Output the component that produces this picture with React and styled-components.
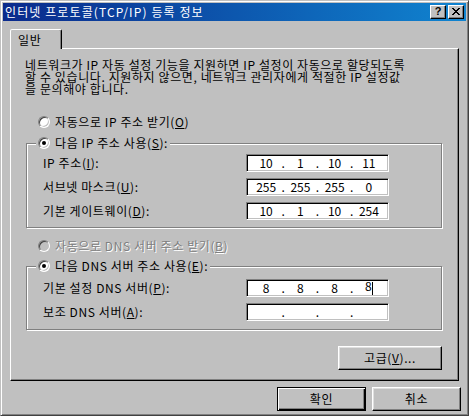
import React from "react"
import styled, { createGlobalStyle } from "styled-components"

const GlobalStyle = createGlobalStyle`
  html, body {
    margin: 0;
    padding: 0;
    background: #c0c0c0;
  }
`

const FONT = `"Noto Sans CJK KR", "Noto Sans", sans-serif`

const Window = styled.div`
  box-sizing: border-box;
  width: 469px;
  height: 416px;
  padding: 2px;
  background: #c0c0c0;
  border: 1px solid;
  border-color: #c0c0c0 #404040 #404040 #c0c0c0;
  box-shadow: inset 1px 1px #fff, inset -1px -1px #808080;
  display: flex;
  flex-direction: column;
  color: #000;
  font: 12px/1 ${FONT};
  letter-spacing: 0.6px;
`

const TitleBar = styled.div`
  height: 18px;
  flex: none;
  display: flex;
  align-items: center;
  padding: 0 2px 0 2px;
  background: linear-gradient(to right, #0a2a8c, #1084d0);
`

const Title = styled.div`
  flex: 1;
  color: #fff;
  font-size: 12px;
  letter-spacing: 1.1px;
  white-space: nowrap;
`

const CaptionButtons = styled.div`
  display: flex;
  gap: 2px;
`

const CaptionButton = styled.div`
  box-sizing: border-box;
  width: 16px;
  height: 14px;
  background: #c0c0c0;
  border: 1px solid;
  border-color: #fff #000 #000 #fff;
  box-shadow: inset -1px -1px #808080;
  display: flex;
  align-items: center;
  justify-content: center;
  font: bold 11px/1 "Liberation Sans", sans-serif;
  letter-spacing: 0;
  color: #000;
  padding-bottom: 1px;
`

const Body = styled.div`
  flex: 1;
  display: flex;
  flex-direction: column;
  padding: 8px 7px 0 7px;
`

const TabRow = styled.div`
  display: flex;
  height: 19px;
  position: relative;
  z-index: 1;
`

const Tab = styled.div`
  box-sizing: border-box;
  width: 52px;
  height: 20px;
  padding: 4px 0 0 7px;
  background: #c0c0c0;
  border: 1px solid;
  border-bottom: none;
  border-color: #fff #000 transparent #fff;
  border-radius: 2px 2px 0 0;
  box-shadow: inset -1px 0 #808080;
  font-size: 12px;
  line-height: 12px;
`

const Panel = styled.div`
  box-sizing: border-box;
  height: 333px;
  flex: none;
  display: flex;
  flex-direction: column;
  padding: 10px 16px 0 14px;
  border: 1px solid;
  border-color: #fff #000 #000 #fff;
  box-shadow: inset -1px -1px #808080;
`

const Intro = styled.p`
  margin: 0;
  line-height: 12px;
  font-size: 12px;
  white-space: nowrap;
`

const Option = styled.label`
  display: flex;
  align-items: center;
  gap: 5px;
  height: 16px;
  margin-top: ${(p) => p.$top || 0}px;
  margin-left: ${(p) => p.$indent || 0}px;
  color: ${(p) => (p.$disabled ? "#808080" : "#000")};
  text-shadow: ${(p) => (p.$disabled ? "1px 1px #fff" : "none")};
  white-space: nowrap;
`

const Radio = styled.span`
  position: relative;
  box-sizing: border-box;
  flex: none;
  width: 12px;
  height: 12px;
  border-radius: 50%;
  border: 1px solid;
  border-color: #808080 #fff #fff #808080;
  background: ${(p) => (p.$disabled ? "#c0c0c0" : "#fff")};
  box-shadow: inset 1px 1px #404040, inset -1px -1px #c0c0c0;

  &::after {
    content: "";
    display: ${(p) => (p.$checked ? "block" : "none")};
    position: absolute;
    left: 3px;
    top: 3px;
    width: 4px;
    height: 4px;
    border-radius: 50%;
    background: #000;
  }
`

const Group = styled.fieldset`
  margin: ${(p) => p.$top}px 0 0 1px;
  padding: 0;
  min-width: 0;
  border: 1px solid #808080;
  box-shadow: inset 1px 1px #fff, 1px 1px #fff;
`

const Legend = styled.legend`
  padding: 0 2px;
  margin-left: 9px;
  background: #c0c0c0;
`

const Fields = styled.div`
  display: grid;
  grid-template-columns: 203px 143px;
  row-gap: 6px;
  align-items: center;
  padding: ${(p) => p.$pt}px 0 ${(p) => p.$pb}px 16px;
`

const Label = styled.span`
  white-space: nowrap;
`

const IpBox = styled.div`
  box-sizing: border-box;
  width: 143px;
  height: 18px;
  display: flex;
  align-items: center;
  padding: 0 2px;
  background: #fff;
  border: 1px solid;
  border-color: #808080 #fff #fff #808080;
  box-shadow: inset 1px 1px #000, inset -1px -1px #c0c0c0;
  font: 12px/1 ${FONT};
  letter-spacing: 0;
`

const Octet = styled.span`
  flex: 1;
  text-align: center;
  padding-bottom: 1px;
`

const Dot = styled.span`
  width: 4px;
  margin: 0 -2px;
  text-align: center;
  padding-bottom: 1px;
`

const Caret = styled.span`
  display: inline-block;
  width: 1px;
  height: 13px;
  background: #000;
  vertical-align: middle;
`

const PanelFooter = styled.div`
  display: flex;
  justify-content: flex-end;
  margin-top: 16px;
`

const Button = styled.button`
  box-sizing: border-box;
  width: ${(p) => p.$w || 89}px;
  height: 24px;
  padding: 0;
  background: #c0c0c0;
  color: #000;
  font: 12px/1 ${FONT};
  letter-spacing: 0.6px;
  border: 1px solid;
  border-color: #fff #000 #000 #fff;
  box-shadow: inset -1px -1px #808080, inset 1px 1px #dfdfdf;
  ${(p) =>
    p.$default &&
    `
    border-color: #000;
    box-shadow: inset 1px 1px #fff, inset -1px -1px #000, inset -2px -2px #808080;
  `}
`

const ButtonRow = styled.div`
  display: flex;
  justify-content: flex-end;
  gap: 6px;
  margin: 6px -2px 0 0;
`

const U = styled.span`
  text-decoration: underline;
  text-underline-offset: 1px;
`

const CloseGlyph = () => (
  <svg width="8" height="7" viewBox="0 0 8 7" shapeRendering="crispEdges">
    {[
      [0, 6],
      [1, 5],
      [2, 4],
      [3, 3],
      [2, 4],
      [1, 5],
      [0, 6],
    ].map(([a, b], y) => (
      <g key={y}>
        <rect x={a} y={y} width={2} height={1} fill="#000" />
        {a !== b && <rect x={b} y={y} width={2} height={1} fill="#000" />}
      </g>
    ))}
  </svg>
)

const IpField = ({ value = ["", "", "", ""], caret }) => (
  <IpBox>
    {value.map((v, i) => (
      <React.Fragment key={i}>
        {i > 0 && <Dot>.</Dot>}
        <Octet>
          {v}
          {caret && i === 3 && <Caret />}
        </Octet>
      </React.Fragment>
    ))}
  </IpBox>
)

export default function App() {
  return (
    <>
      <GlobalStyle />
      <Window>
        <TitleBar>
          <Title>인터넷 프로토콜(TCP/IP) 등록 정보</Title>
          <CaptionButtons>
            <CaptionButton>?</CaptionButton>
            <CaptionButton>
              <CloseGlyph />
            </CaptionButton>
          </CaptionButtons>
        </TitleBar>
        <Body>
          <TabRow>
            <Tab>일반</Tab>
          </TabRow>
          <Panel>
            <Intro>
              네트워크가 IP 자동 설정 기능을 지원하면 IP 설정이 자동으로 할당되도록
              <br />
              할 수 있습니다. 지원하지 않으면, 네트워크 관리자에게 적절한 IP 설정값
              <br />
              을 문의해야 합니다.
            </Intro>

            <Option $top={19} $indent={13}>
              <Radio />
              <span>
                자동으로 IP 주소 받기(<U>O</U>)
              </span>
            </Option>

            <Group $top={5}>
              <Legend>
                <Option>
                  <Radio $checked />
                  <span>
                    다음 IP 주소 사용(<U>S</U>):
                  </span>
                </Option>
              </Legend>
              <Fields $pt={3} $pb={7}>
                <Label>
                  IP 주소(<U>I</U>):
                </Label>
                <IpField value={["10", "1", "10", "11"]} />
                <Label>
                  서브넷 마스크(<U>U</U>):
                </Label>
                <IpField value={["255", "255", "255", "0"]} />
                <Label>
                  기본 게이트웨이(<U>D</U>):
                </Label>
                <IpField value={["10", "1", "10", "254"]} />
              </Fields>
            </Group>

            <Option $top={10} $indent={13} $disabled>
              <Radio $disabled />
              <span>
                자동으로 DNS 서버 주소 받기(<U>B</U>)
              </span>
            </Option>

            <Group $top={4}>
              <Legend>
                <Option>
                  <Radio $checked />
                  <span>
                    다음 DNS 서버 주소 사용(<U>E</U>):
                  </span>
                </Option>
              </Legend>
              <Fields $pt={5} $pb={8}>
                <Label>
                  기본 설정 DNS 서버(<U>P</U>):
                </Label>
                <IpField value={["8", "8", "8", "8"]} caret />
                <Label>
                  보조 DNS 서버(<U>A</U>):
                </Label>
                <IpField />
              </Fields>
            </Group>

            <PanelFooter>
              <Button $w={104}>
                고급(<U>V</U>)...
              </Button>
            </PanelFooter>
          </Panel>
          <ButtonRow>
            <Button $default>확인</Button>
            <Button>취소</Button>
          </ButtonRow>
        </Body>
      </Window>
    </>
  )
}
